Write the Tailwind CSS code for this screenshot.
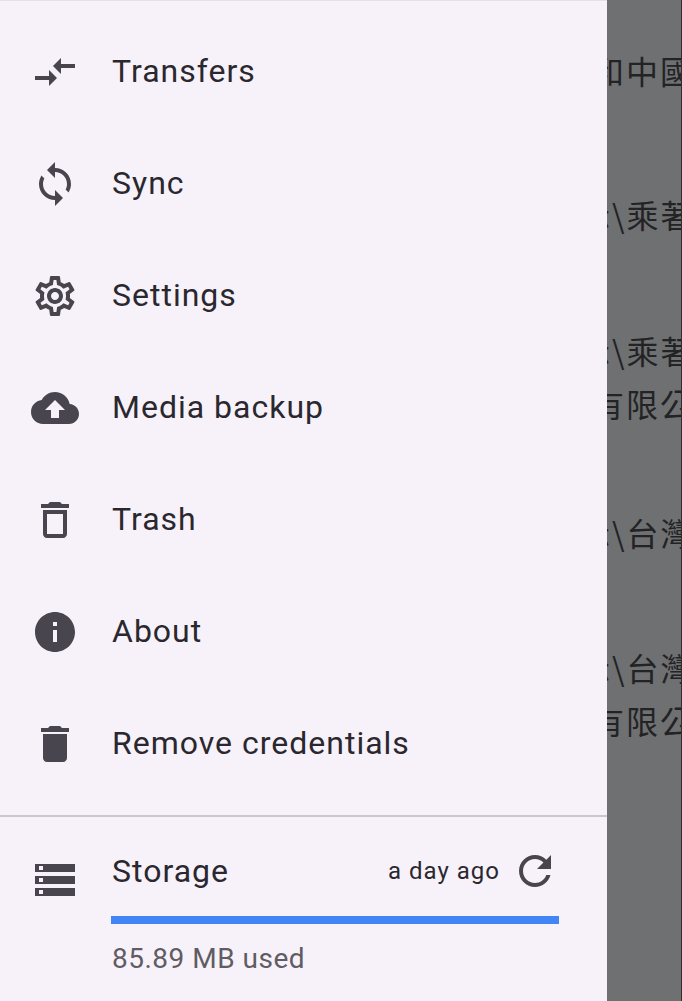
<!DOCTYPE html>
<html lang="en">
<head>
    <meta charset="UTF-8">
    <title>Drawer</title>
    <script src="https://cdn.jsdelivr.net/npm/@tailwindcss/browser@4"></script>
</head>
<body class="bg-[#6f7072]">
    <div class="flex w-[682px] h-[1001px] overflow-hidden font-['Roboto','Noto_Sans_CJK_TC',sans-serif]">
        <!-- drawer -->
        <nav class="w-[607px] h-full shrink-0 flex flex-col bg-[#f7f2fa] border-t border-[#e4e0e8] text-[32px] leading-[40px] tracking-[1px] text-[#2a282e]">
            <ul class="pt-[15px] h-[814px]">
                <li class="h-[112px] flex items-center gap-[33px] pl-[31px]">
                    <svg class="w-12 h-12 fill-[#49454f]" viewBox="0 0 24 24"><path d="M9.01 14H2v2h7.01v3L13 15l-3.99-4v3zm5.98-1v-3H22V8h-7.01V5L11 9l3.99 4z"/></svg>
                    <span class="mb-[2px]">Transfers</span>
                </li>
                <li class="h-[112px] flex items-center gap-[33px] pl-[31px]">
                    <svg class="w-12 h-12 fill-[#49454f]" viewBox="0 0 24 24"><path d="M12 4V1L8 5l4 4V6c3.31 0 6 2.69 6 6 0 1.01-.25 1.97-.7 2.8l1.46 1.46C19.54 15.03 20 13.57 20 12c0-4.42-3.58-8-8-8zm0 14c-3.31 0-6-2.69-6-6 0-1.01.25-1.97.7-2.8L5.24 7.74C4.46 8.97 4 10.43 4 12c0 4.42 3.58 8 8 8v3l4-4-4-4v3z"/></svg>
                    <span class="mb-[2px]">Sync</span>
                </li>
                <li class="h-[112px] flex items-center gap-[33px] pl-[31px]">
                    <svg class="w-12 h-12 fill-[#49454f]" viewBox="0 0 24 24"><path d="M19.43 12.98c.04-.32.07-.64.07-.98 0-.34-.03-.66-.07-.98l2.11-1.65c.19-.15.24-.42.12-.64l-2-3.46c-.09-.16-.26-.25-.44-.25-.06 0-.12.01-.17.03l-2.49 1c-.52-.4-1.08-.73-1.69-.98l-.38-2.65C14.46 2.18 14.25 2 14 2h-4c-.25 0-.46.18-.49.42l-.38 2.65c-.61.25-1.17.59-1.69.98l-2.49-1c-.06-.02-.12-.03-.18-.03-.17 0-.34.09-.43.25l-2 3.46c-.13.22-.07.49.12.64l2.11 1.65c-.04.32-.07.65-.07.98 0 .33.03.66.07.98l-2.11 1.65c-.19.15-.24.42-.12.64l2 3.46c.09.16.26.25.44.25.06 0 .12-.01.17-.03l2.49-1c.52.4 1.08.73 1.69.98l.38 2.65c.03.24.24.42.49.42h4c.25 0 .46-.18.49-.42l.38-2.65c.61-.25 1.17-.59 1.69-.98l2.49 1c.06.02.12.03.18.03.17 0 .34-.09.43-.25l2-3.46c.12-.22.07-.49-.12-.64l-2.11-1.65zm-1.98-1.71c.04.31.05.52.05.73 0 .21-.02.43-.05.73l-.14 1.13.89.7 1.08.84-.7 1.21-1.27-.51-1.04-.42-.9.68c-.43.32-.84.56-1.25.73l-1.06.43-.16 1.13-.2 1.35h-1.4l-.19-1.35-.16-1.13-1.06-.43c-.43-.18-.83-.41-1.23-.71l-.91-.7-1.06.43-1.27.51-.7-1.21 1.08-.84.89-.7-.14-1.13c-.03-.31-.05-.54-.05-.74s.02-.43.05-.73l.14-1.13-.89-.7-1.08-.84.7-1.21 1.27.51 1.04.42.9-.68c.43-.32.84-.56 1.25-.73l1.06-.43.16-1.13.2-1.35h1.39l.19 1.35.16 1.13 1.06.43c.43.18.83.41 1.23.71l.91.7 1.06-.43 1.27-.51.7 1.21-1.07.85-.89.7.14 1.13zM12 8c-2.21 0-4 1.79-4 4s1.79 4 4 4 4-1.79 4-4-1.79-4-4-4zm0 6c-1.1 0-2-.9-2-2s.9-2 2-2 2 .9 2 2-.9 2-2 2z"/></svg>
                    <span class="mb-[2px]">Settings</span>
                </li>
                <li class="h-[112px] flex items-center gap-[33px] pl-[31px]">
                    <svg class="w-12 h-12 fill-[#49454f]" viewBox="0 0 24 24"><path d="M19.35 10.04C18.67 6.59 15.64 4 12 4 9.11 4 6.6 5.64 5.35 8.04 2.34 8.36 0 10.91 0 14c0 3.31 2.69 6 6 6h13c2.76 0 5-2.24 5-5 0-2.64-2.05-4.78-4.65-4.96zM14 13v4h-4v-4H7l5-5 5 5h-3z"/></svg>
                    <span class="mb-[2px]">Media backup</span>
                </li>
                <li class="h-[112px] flex items-center gap-[33px] pl-[31px]">
                    <svg class="w-12 h-12 fill-[#49454f]" viewBox="0 0 24 24"><path d="M6 19c0 1.1.9 2 2 2h8c1.1 0 2-.9 2-2V7H6v12zM8 9h8v10H8V9zm7.5-5l-1-1h-5l-1 1H5v2h14V4z"/></svg>
                    <span class="mb-[2px]">Trash</span>
                </li>
                <li class="h-[112px] flex items-center gap-[33px] pl-[31px]">
                    <svg class="w-12 h-12 fill-[#49454f]" viewBox="0 0 24 24"><path d="M12 2C6.48 2 2 6.48 2 12s4.48 10 10 10 10-4.48 10-10S17.52 2 12 2zm1 15h-2v-6h2v6zm0-8h-2V7h2v2z"/></svg>
                    <span class="mb-[2px]">About</span>
                </li>
                <li class="h-[112px] flex items-center gap-[33px] pl-[31px]">
                    <svg class="w-12 h-12 fill-[#49454f]" viewBox="0 0 24 24"><path d="M6 19c0 1.1.9 2 2 2h8c1.1 0 2-.9 2-2V7H6v12zM19 4h-3.5l-1-1h-5l-1 1H5v2h14V4z"/></svg>
                    <span class="mb-[2px]">Remove credentials</span>
                </li>
            </ul>
            <!-- storage -->
            <div class="border-t-2 border-[#cac6ce] flex gap-[32px] pl-[31px] pr-[48px] flex-1">
                <svg class="w-12 h-12 mt-[39px] fill-[#49454f]" viewBox="0 0 24 24"><path d="M2 20h20v-4H2v4zm2-3h2v2H4v-2zM2 4v4h20V4H2zm4 3H4V5h2v2zm-4 7h20v-4H2v4zm2-3h2v2H4v-2z"/></svg>
                <div class="flex-1 flex flex-col">
                    <div class="flex items-center h-[48px] mt-[30px]">
                        <span class="flex-1 pl-px">Storage</span>
                        <span class="text-[24px] mr-[11px]">a day ago</span>
                        <svg class="w-12 h-12 fill-[#49454f]" viewBox="0 0 24 24"><path d="M17.65 6.35C16.2 4.9 14.21 4 12 4c-4.42 0-7.99 3.58-7.99 8s3.57 8 7.99 8c3.73 0 6.84-2.55 7.73-6h-2.08c-.82 2.33-3.04 4-5.65 4-3.31 0-6-2.69-6-6s2.69-6 6-6c1.66 0 3.14.69 4.22 1.78L13 11h7V4l-2.35 2.35z"/></svg>
                    </div>
                    <div class="h-2 mt-[21px] bg-[#4285f4]"></div>
                    <p class="mt-[15px] pl-px text-[28px] tracking-[0.5px] text-[#5f5c63]">85.89 MB used</p>
                </div>
            </div>
        </nav>
        <!-- page behind the scrim -->
        <div class="flex-1 h-full overflow-hidden border-r border-[#2f2f30] whitespace-nowrap text-[32px] leading-[53px] tracking-[2px] text-[#232325] font-['Noto_Sans_CJK_TC',sans-serif]">
            <p class="mt-[44px] -ml-[15px]">和中國</p>
            <p class="mt-[91px] -ml-[29px]">示\乘著</p>
            <p class="mt-[83px] -ml-[29px]">示\乘著</p>
            <p class="-ml-[15px]">有限公</p>
            <p class="mt-[76px] -ml-[29px]">示\台灣</p>
            <p class="mt-[82px] -ml-[29px]">示\台灣</p>
            <p class="-ml-[15px]">有限公</p>
        </div>
    </div>
</body>
</html>
